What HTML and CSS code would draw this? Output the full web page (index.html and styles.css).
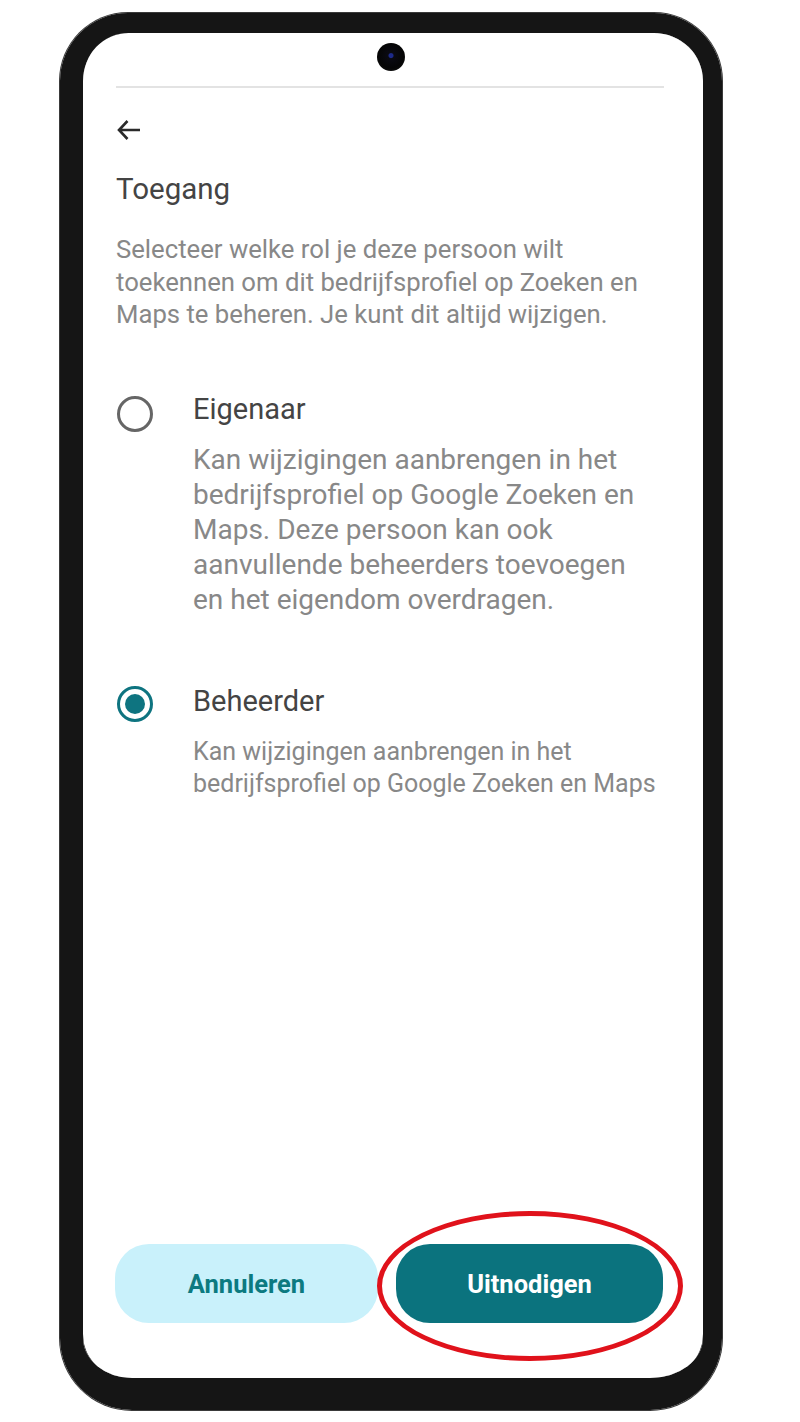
FILE: index.html
```html
<!DOCTYPE html>
<html lang="nl">
<head>
<meta charset="utf-8">
<title>Toegang</title>
<link rel="stylesheet" href="styles.css">
</head>
<body>
<div class="phone">
  <div class="screen">
    <div class="topbar"><div class="camera"></div></div>
    <div class="divider"></div>
    <div class="content">
      <svg class="back" width="27" height="26" viewBox="0 0 27 26"><path d="M25 13H4M12.5 4L4 13l8.5 9" fill="none" stroke="#2a2a2a" stroke-width="2.6"/></svg>
      <h1 class="title">Toegang</h1>
      <p class="intro">Selecteer welke rol je deze persoon wilt toekennen om dit bedrijfsprofiel op Zoeken en Maps te beheren. Je kunt dit altijd wijzigen.</p>
      <div class="option option-owner">
        <span class="radio"></span>
        <div class="opt-text">
          <div class="opt-label">Eigenaar</div>
          <div class="opt-desc large">Kan wijzigingen aanbrengen in het bedrijfsprofiel op Google Zoeken en Maps. Deze persoon kan ook aanvullende beheerders toevoegen en het eigendom overdragen.</div>
        </div>
      </div>
      <div class="option option-admin">
        <span class="radio checked"></span>
        <div class="opt-text">
          <div class="opt-label">Beheerder</div>
          <div class="opt-desc">Kan wijzigingen aanbrengen in het bedrijfsprofiel op Google Zoeken en Maps</div>
        </div>
      </div>
    </div>
    <div class="actions">
      <button class="btn btn-cancel">Annuleren</button>
      <div class="invite-wrap">
        <button class="btn btn-invite">Uitnodigen</button>
        <span class="highlight"></span>
      </div>
    </div>
  </div>
</div>
</body>
</html>
```

FILE: styles.css
```css
* { box-sizing: border-box; }
html, body { margin: 0; padding: 0; background: #fff; }
body { font-family: Roboto, "Liberation Sans", Arial, sans-serif; width: 800px; height: 1422px; overflow: hidden; }

.phone {
  margin: 13px 0 0 60px;
  width: 662px;
  height: 1397px;
  border-style: solid;
  border-color: #151515;
  border-width: 20px 19px 32px 23px;
  border-radius: 68px 68px 72px 72px;
  box-shadow: inset 0 0 0 1px #444, 0 0 0 1px #3a3a3a;
  overflow: hidden;
}
.screen {
  height: 100%;
  background: #fff;
  border-radius: 46px 46px 44px 44px;
  display: flex;
  flex-direction: column;
}
.topbar {
  height: 53px;
  display: flex;
  justify-content: center;
  padding-top: 10px;
  padding-right: 4px;
}
.camera {
  width: 28px;
  height: 28px;
  border-radius: 50%;
  background: radial-gradient(circle at 50% 45%, #1d2a8a 0 2px, #0a0a12 3px, #050505 60%, #1a1a1a 100%);
}
.divider {
  height: 2px;
  margin: 0 39px 0 33px;
  background: #e3e3e3;
}
.content {
  padding: 0 39px 0 33px;
  display: flex;
  flex-direction: column;
}
.back { display: block; margin-top: 29px; margin-left: -1px; }
.title {
  margin: 30px 0 0;
  font-size: 29.5px;
  line-height: 32px;
  font-weight: 400;
  color: #444;
}
.intro {
  margin: 28px 0 0;
  font-size: 25.7px;
  line-height: 32.5px;
  color: #888;
}
.option {
  display: flex;
  align-items: flex-start;
}
.option-owner { margin-top: 60px; }
.option-admin { margin-top: 65px; }
.radio {
  flex: none;
  width: 36px;
  height: 36px;
  border-radius: 50%;
  border: 3px solid #666;
  margin: 5px 40px 0 1px;
  display: flex;
  align-items: center;
  justify-content: center;
}
.option-admin .radio { margin-top: 3px; }
.radio.checked { border-color: #0e7480; }
.radio.checked::after {
  content: "";
  width: 20px;
  height: 20px;
  border-radius: 50%;
  background: #0e7480;
}
.opt-label {
  font-size: 29px;
  line-height: 36px;
  color: #444;
}
.opt-desc {
  margin-top: 17px;
  font-size: 25px;
  line-height: 32px;
  color: #888;
}
.opt-desc.large {
  margin-top: 15px;
  max-width: 452px;
  font-size: 28px;
  line-height: 35.2px;
}
.actions {
  margin-top: auto;
  padding: 0 40px 55px 32px;
  display: flex;
  gap: 18px;
}
.btn {
  height: 79px;
  border: none;
  border-radius: 34px;
  font-family: Roboto, "Liberation Sans", Arial, sans-serif;
  font-weight: 700;
  font-size: 25.5px;
  cursor: pointer;
}
.btn-cancel {
  width: 263px;
  background: #c9f1fb;
  color: #0c7a80;
}
.invite-wrap {
  position: relative;
  flex: 1;
}
.btn-invite {
  width: 100%;
  background: #0b737e;
  color: #fff;
}
.highlight {
  position: absolute;
  left: -19px;
  top: -33px;
  width: 306px;
  height: 150px;
  border: 5px solid #e0121b;
  border-radius: 50%;
  pointer-events: none;
}
```
